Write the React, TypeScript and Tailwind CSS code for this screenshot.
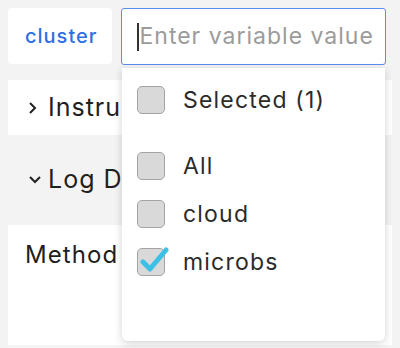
import React from "react";

function Box({ checked }: { checked?: boolean }) {
  return (
    <div className="relative w-[28px] h-[28px] shrink-0 rounded-[5px] border-[1.5px] border-[#a3a3a3] bg-[#d9d9d9]">
      {checked && (
        <svg className="absolute left-[1px] top-[-4px]" width="30" height="30" viewBox="0 0 30 30">
          <path d="M4 17 L11 24 L27 5" fill="none" stroke="#3ec0e6" strokeWidth="5" strokeLinecap="round" strokeLinejoin="round" />
        </svg>
      )}
    </div>
  );
}

function Option({ label, checked }: { label: string; checked?: boolean }) {
  return (
    <div className="flex items-center gap-[18px] h-[48px] px-[15px]">
      <Box checked={checked} />
      <span className="text-[23px] tracking-[1.2px] text-[#2b2b2b]">{label}</span>
    </div>
  );
}

export default function App() {
  return (
    <div className="relative w-[400px] h-[348px] overflow-hidden bg-[#f3f3f3] font-['Inter',sans-serif]">
      <div className="flex gap-[9px] px-2 pt-2">
        <div className="w-[104px] h-[56px] shrink-0 rounded bg-white flex items-center pl-[17px] text-[20px] tracking-[1px] font-medium text-[#2f6fe4]">
          cluster
        </div>
        <div className="relative flex-1 mr-[6px]">
          <div className="h-[57px] rounded-[3px] border-[1.5px] border-[#5b8def] bg-white flex items-center pl-[15px]">
            <span className="w-[1.5px] h-[28px] bg-[#333]" />
            <span className="text-[23px] tracking-[1px] text-[#9b9b9b] ml-[1px]">Enter variable value</span>
          </div>
          <div className="absolute left-[1px] right-[1px] top-[60px] h-[273px] rounded-b-[6px] bg-white shadow-[0_2px_8px_rgba(0,0,0,0.18)] pt-[8px]">
            <Option label="Selected (1)" />
            <div className="h-[18px]" />
            <Option label="All" />
            <Option label="cloud" />
            <Option label="microbs" checked />
          </div>
        </div>
      </div>

      <div className="mt-[15px] mx-2 h-[55px] bg-white flex items-center pl-[20px] gap-[10px] text-[25px] tracking-[1px] text-[#1f1f1f]">
        <svg width="10" height="14" viewBox="0 0 10 14">
          <path d="M2 2 L7 7 L2 12" fill="none" stroke="#222" strokeWidth="2" />
        </svg>
        <span>Instrumentation</span>
      </div>

      <div className="mx-2 h-[90px] flex items-center pl-[20px] gap-[6px] text-[25px] tracking-[1px] text-[#1f1f1f]">
        <svg width="14" height="10" viewBox="0 0 14 10">
          <path d="M2 2 L7 7 L12 2" fill="none" stroke="#222" strokeWidth="2" />
        </svg>
        <span>Log Details</span>
      </div>

      <div className="mx-2 h-[120px] bg-white pl-[17px] pt-[12px] text-[24px] tracking-[1.1px] text-[#1f1f1f]">
        Method
      </div>
    </div>
  );
}
